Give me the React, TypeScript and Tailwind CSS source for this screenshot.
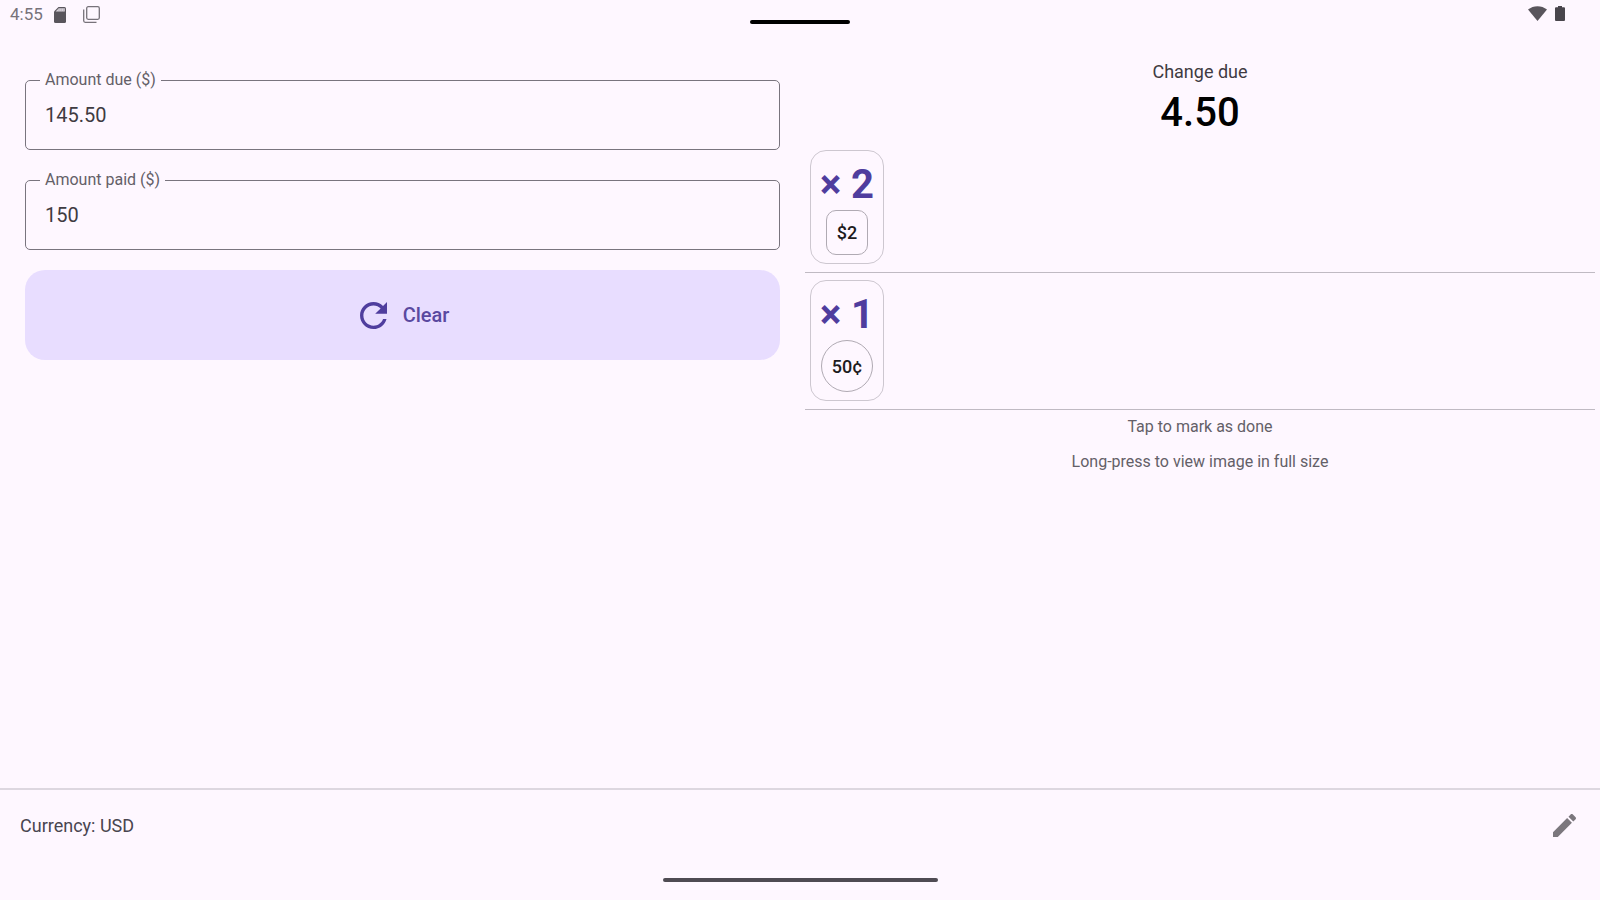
import React, { useState } from 'react'

interface AmountFieldProps {
  id: string
  label: string
  value: string
  onChange: (value: string) => void
}

interface Denomination {
  label: string
  count: number
  kind: 'bill' | 'coin'
}

const denominations: Denomination[] = [
  { label: '$2', count: 2, kind: 'bill' },
  { label: '50¢', count: 1, kind: 'coin' },
]

function StatusBar() {
  return (
    <header className="relative flex h-[50px] items-start justify-between pl-[10px] pr-[35px]">
      <div className="flex h-[29px] items-center text-[17px] text-[#77727a]">
        <span>4:55</span>
        <svg className="ml-[11px] h-4 w-3" viewBox="0 0 12 16">
          <path d="M4.5 0H10.5Q12 0 12 1.5V14.5Q12 16 10.5 16H1.5Q0 16 0 14.5V4.5Z" fill="#59555c" />
          <path d="M4.8 1.2H10.8V4.6H1.6Z" fill="#d9d3db" />
          <path d="M5 1V4.4M7.2 1V4.4M9.4 1V4.4" stroke="#a9a4ac" strokeWidth="0.6" />
        </svg>
        <svg className="ml-[17px] h-[17px] w-[17px]" viewBox="0 0 17 17" fill="none" stroke="#77727a" strokeWidth="1.3">
          <rect x="3.7" y="0.7" width="12.6" height="12.6" rx="1.5" />
          <path d="M0.7 3.5V14.8Q0.7 16.3 2.2 16.3H13.5" />
        </svg>
      </div>
      <div className="absolute left-1/2 top-5 h-1 w-[100px] -translate-x-1/2 rounded-full bg-black" />
      <div className="flex h-[27px] items-center gap-[8px]">
        <svg className="h-[15px] w-[19px]" viewBox="0 0 19 15">
          <path d="M9.5 15L0 3.6C5.4-1 13.6-1 19 3.6Z" fill="#59555c" />
        </svg>
        <svg className="h-[15px] w-[10px]" viewBox="0 0 10 15">
          <path d="M3 0H7V1.3H9Q10 1.3 10 2.3V14Q10 15 9 15H1Q0 15 0 14V2.3Q0 1.3 1 1.3H3Z" fill="#49454c" />
        </svg>
      </div>
    </header>
  )
}

function AmountField({ id, label, value, onChange }: AmountFieldProps) {
  return (
    <fieldset className="h-20 rounded-[5px] border border-[#79747e] px-[14px]">
      <legend className="h-5 px-[5px] text-[16px] leading-5 text-[#645f68]">
        <label htmlFor={id}>{label}</label>
      </legend>
      <input
        id={id}
        type="text"
        inputMode="decimal"
        value={value}
        onChange={(e) => onChange(e.target.value)}
        className="block h-[50px] w-full bg-transparent px-[5px] text-[20px] text-[#3f3b42] outline-none"
      />
    </fieldset>
  )
}

function DenominationCard({ item }: { item: Denomination }) {
  const [done, setDone] = useState(false)

  return (
    <button
      type="button"
      onClick={() => setDone(!done)}
      className={`flex w-[74px] flex-col items-center rounded-[16px] border border-[#cdc7d0] pb-2 pt-[9px] ${done ? 'opacity-40' : ''}`}
    >
      <span className="h-[50px] whitespace-nowrap text-[40px] font-bold leading-[50px] text-[#4f3d9e]">
        × {item.count}
      </span>
      <span
        className={`flex items-center justify-center border border-[#b0aab3] text-[18px] font-medium text-[#1d1b20] ${
          item.kind === 'bill' ? 'h-[45px] w-[42px] rounded-[10px]' : 'h-[52px] w-[52px] rounded-full'
        }`}
      >
        {item.label}
      </span>
    </button>
  )
}

export default function App() {
  const [due, setDue] = useState('145.50')
  const [paid, setPaid] = useState('150')
  const change = Math.max(0, Number(paid) - Number(due)).toFixed(2)

  const clear = () => {
    setDue('')
    setPaid('')
  }

  return (
    <div className="flex min-h-screen flex-col bg-[#fef7ff] font-[Roboto,sans-serif]">
      <StatusBar />

      <main className="grid flex-1 grid-cols-2">
        <section className="flex flex-col gap-5 pl-[25px] pr-5 pt-5">
          <AmountField id="due" label="Amount due ($)" value={due} onChange={setDue} />
          <AmountField id="paid" label="Amount paid ($)" value={paid} onChange={setPaid} />
          <button
            type="button"
            onClick={clear}
            className="flex h-[90px] items-center justify-center gap-4 rounded-[20px] bg-[#e8ddff] pl-1 text-[20px] font-medium text-[#5a49a0]"
          >
            <svg className="h-[27px] w-[27px]" viewBox="4 4 16 16" fill="#4f3d9e">
              <path d="M17.65 6.35C16.2 4.9 14.21 4 12 4c-4.42 0-7.99 3.58-7.99 8s3.57 8 7.99 8c3.73 0 6.84-2.55 7.73-6h-2.08c-.82 2.33-3.04 4-5.65 4-3.31 0-6-2.69-6-6s2.69-6 6-6c1.66 0 3.14.69 4.22 1.78L13 11h7V4l-2.35 2.35z" />
            </svg>
            Clear
          </button>
        </section>

        <section className="px-[5px] pt-[10px] text-center">
          <h2 className="text-[18px] leading-6 text-[#3f3b42]">Change due</h2>
          <p className="text-[40px] font-medium leading-[58px] text-black">{change}</p>
          <ul className="mt-2">
            {denominations.map((item) => (
              <li key={item.label} className="mb-[7px] border-b border-[#c0bac3] pb-2 pl-[5px]">
                <DenominationCard item={item} />
              </li>
            ))}
          </ul>
          <p className="text-[16px] leading-5 text-[#645f68]">Tap to mark as done</p>
          <p className="mt-[15px] text-[16px] leading-5 text-[#645f68]">Long-press to view image in full size</p>
        </section>
      </main>

      <footer className="border-t-2 border-[#ddd7e0]">
        <div className="flex h-[70px] items-center justify-between pl-5 pr-6 text-[18px] text-[#49454f]">
          <span>Currency: USD</span>
          <button type="button" aria-label="Edit currency">
            <svg className="h-[23px] w-[23px]" viewBox="3 3 18 18" fill="#7b777d">
              <path d="M3 17.25V21h3.75L17.81 9.94l-3.75-3.75L3 17.25zM20.71 7.04c.39-.39.39-1.02 0-1.41l-2.34-2.34c-.39-.39-1.02-.39-1.41 0l-1.83 1.83 3.75 3.75 1.83-1.83z" />
            </svg>
          </button>
        </div>
        <div className="flex h-10 justify-center pt-[18px]">
          <div className="h-1 w-[275px] rounded-full bg-[#4f4b53]" />
        </div>
      </footer>
    </div>
  )
}
